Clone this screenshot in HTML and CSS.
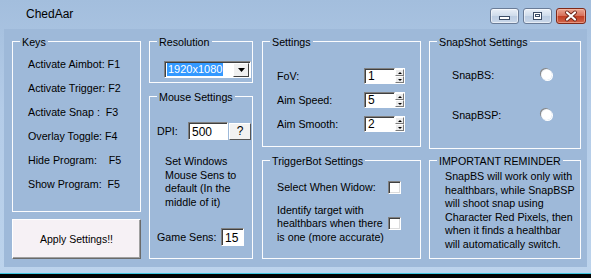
FILE: index.html
```html
<!DOCTYPE html>
<html lang="en">
<head>
    <meta charset="UTF-8">
    <title>ChedAar</title>
    <link rel="stylesheet" href="styles.css">
</head>
<body>
    <div class="window">
        <div class="titlebar">
            <span class="title">ChedAar</span>
            <div class="caption">
                <span class="cap-btn">
                    <svg width="27" height="14" viewBox="0 0 27 14"><rect x="8.5" y="7.5" width="10" height="3" fill="#fff" stroke="#3c4d66"/></svg>
                </span>
                <span class="cap-btn">
                    <svg width="27" height="14" viewBox="0 0 27 14"><rect x="9.5" y="3.5" width="8" height="7" fill="#fff" stroke="#3c4d66"/><rect x="11.5" y="5.5" width="4" height="2" fill="none" stroke="#3c4d66"/></svg>
                </span>
                <span class="cap-btn close">
                    <svg width="28" height="14" viewBox="0 0 28 14"><path d="M10 3.5 L18 10.5 M18 3.5 L10 10.5" stroke="#6b2418" stroke-width="4" stroke-linecap="round"/><path d="M10 3.5 L18 10.5 M18 3.5 L10 10.5" stroke="#fff" stroke-width="2.2" stroke-linecap="round"/></svg>
                </span>
            </div>
        </div>

        <div class="client">
            <div class="col col-keys">
                <section class="group keys">
                    <div class="group-title">Keys</div>
                    <div class="group-body key-list">
                        <span>Activate Aimbot: F1</span>
                        <span>Activate Trigger: F2</span>
                        <span>Activate Snap :  F3</span>
                        <span>Overlay Toggle: F4</span>
                        <span>Hide Program:    F5</span>
                        <span>Show Program:  F5</span>
                    </div>
                </section>
                <button class="apply" type="button">Apply Settings!!</button>
            </div>

            <div class="col col-mid">
                <section class="group resolution">
                    <div class="group-title">Resolution</div>
                    <div class="group-body">
                        <div class="select">
                            <span class="sel-text">1920x1080</span>
                            <span class="drop">
                                <svg width="7" height="4" viewBox="0 0 7 4"><path d="M0 0 H7 L3.5 4 Z" fill="#000"/></svg>
                            </span>
                        </div>
                    </div>
                </section>
                <section class="group mouse">
                    <div class="group-title">Mouse Settings</div>
                    <div class="group-body">
                        <div class="dpi-row">
                            <label for="dpi">DPI:</label>
                            <input class="field dpi" id="dpi" type="text" value="500">
                            <button class="help" type="button">?</button>
                        </div>
                        <p class="sens-note">Set Windows<br>Mouse Sens to<br>default (In the<br>middle of it)</p>
                        <div class="game-row">
                            <label for="gameSens">Game Sens:</label>
                            <input class="field game" id="gameSens" type="text" value="15">
                        </div>
                    </div>
                </section>
            </div>

            <div class="col col-settings">
                <section class="group settings">
                    <div class="group-title">Settings</div>
                    <div class="group-body">
                        <div class="spin-row">
                            <label for="fov">FoV:</label>
                            <input class="field spin" id="fov" type="text" value="1">
                            <span class="spinner"><span class="up"></span><span class="down"></span></span>
                        </div>
                        <div class="spin-row">
                            <label for="aimSpeed">Aim Speed:</label>
                            <input class="field spin" id="aimSpeed" type="text" value="5">
                            <span class="spinner"><span class="up"></span><span class="down"></span></span>
                        </div>
                        <div class="spin-row">
                            <label for="aimSmooth">Aim Smooth:</label>
                            <input class="field spin" id="aimSmooth" type="text" value="2">
                            <span class="spinner"><span class="up"></span><span class="down"></span></span>
                        </div>
                    </div>
                </section>
                <section class="group trigger">
                    <div class="group-title">TriggerBot Settings</div>
                    <div class="group-body">
                        <div class="check-row">
                            <span class="check-label">Select When Widow:</span>
                            <span class="checkbox"></span>
                        </div>
                        <div class="check-row second">
                            <span class="check-label">Identify target with<br>healthbars when there<br>is one (more accurate)</span>
                            <span class="checkbox"></span>
                        </div>
                    </div>
                </section>
            </div>

            <div class="col col-snap">
                <section class="group snap">
                    <div class="group-title">SnapShot Settings</div>
                    <div class="group-body">
                        <div class="radio-row">
                            <span class="radio-label">SnapBS:</span>
                            <span class="radio"></span>
                        </div>
                        <div class="radio-row">
                            <span class="radio-label">SnapBSP:</span>
                            <span class="radio"></span>
                        </div>
                    </div>
                </section>
                <section class="group reminder">
                    <div class="group-title">IMPORTANT REMINDER</div>
                    <div class="group-body">
                        <p>SnapBS will work only with<br>healthbars, while SnapBSP<br>will shoot snap using<br>Character Red Pixels, then<br>when it finds a healthbar<br>will automatically switch.</p>
                    </div>
                </section>
            </div>
        </div>
    </div>
    <div class="edge"></div>
</body>
</html>
```

FILE: styles.css
```css
* {
    margin: 0;
    padding: 0;
    box-sizing: border-box;
}

body {
    background-color: #000;
    font-family: 'Liberation Sans', Arial, sans-serif;
    font-size: 10.7px;
    color: #000;
    width: 591px;
    height: 278px;
    overflow: hidden;
}

.window {
    width: 591px;
    height: 273px;
    background: linear-gradient(180deg, #a3bedd 0%, #b4cce8 40%, #bcd3ec 100%);
}

/* title bar */
.titlebar {
    height: 29px;
    display: flex;
    justify-content: space-between;
    padding: 0 5px 0 26px;
}

.title {
    font-size: 12px;
    line-height: 29px;
    color: #000;
    padding-bottom: 1px;
}

.caption {
    display: flex;
    gap: 4px;
    margin-top: 8px;
    height: 16px;
}

.cap-btn {
    width: 29px;
    height: 16px;
    border: 1px solid #6a7c97;
    border-radius: 3px;
    background: linear-gradient(180deg, #eaf0f8 0%, #cfdceb 48%, #bccde2 52%, #cad8ea 100%);
    box-shadow: inset 0 0 0 1px rgba(255, 255, 255, 0.55);
    display: flex;
}

.cap-btn.close {
    width: 30px;
    border-color: #7f2a1a;
    background: linear-gradient(180deg, #e9a693 0%, #d7705a 48%, #c13d22 52%, #d0644a 100%);
    box-shadow: inset 0 0 0 1px rgba(255, 200, 180, 0.5);
}

/* client area */
.client {
    margin: 0 4px;
    height: 238px;
    background-color: #9eb9d9;
    display: flex;
    padding: 7px 0 0 8px;
}

.col {
    display: flex;
    flex-direction: column;
}

.col-keys {
    width: 129px;
    margin-right: 8px;
}

.col-mid {
    width: 104px;
    margin-right: 9px;
}

.col-settings {
    width: 159px;
    margin-right: 8px;
}

.col-snap {
    width: 152px;
}

/* group box: title sits in the top border line */
.group {
    display: flex;
    flex-direction: column;
}

.group-title {
    display: flex;
    line-height: 13px;
    white-space: nowrap;
}

.group-title::before,
.group-title::after {
    content: "";
    height: 7px;
    align-self: flex-end;
    border-top: 1px solid #fbfcfe;
}

.group-title::before {
    width: 7px;
    margin-right: 2px;
    border-left: 1px solid #fbfcfe;
}

.group-title::after {
    flex: 1;
    margin-left: 2px;
    border-right: 1px solid #fbfcfe;
}

.group-body {
    flex: 1;
    border: 1px solid #fbfcfe;
    border-top: 0;
}

/* keys */
.keys {
    height: 176px;
}

.key-list {
    display: flex;
    flex-direction: column;
    gap: 11px;
    padding: 9px 0 0 15px;
    line-height: 13px;
    white-space: pre;
}

.apply {
    margin-top: 7px;
    height: 40px;
    background-color: #f6f1f5;
    border: 1px solid;
    border-color: #fff #6a6a6a #6a6a6a #fff;
    box-shadow: inset -1px -1px 0 #a0a0a0;
    font-family: inherit;
    font-size: 10.5px;
    color: #000;
}

/* resolution */
.resolution {
    height: 47px;
}

.resolution .group-body {
    padding: 12px 0 0 14px;
}

.select {
    width: 87px;
    height: 17px;
    background-color: #fff;
    border: 1px solid;
    border-color: #808080 #fff #fff #808080;
    box-shadow: inset 1px 1px 0 #404040;
    display: flex;
    align-items: center;
    padding: 1px 1px 1px 2px;
}

.sel-text {
    flex: none;
    background-color: #3399ff;
    color: #fff;
    font-size: 11px;
    line-height: 13px;
    padding: 0 1px;
    white-space: nowrap;
}

.drop {
    margin-left: auto;
    width: 16px;
    height: 14px;
    background-color: #f0f0f0;
    border: 1px solid;
    border-color: #fff #404040 #404040 #fff;
    display: flex;
    align-items: center;
    justify-content: center;
}

/* mouse settings */
.mouse {
    margin-top: 8px;
    height: 168px;
}

.mouse .group-body {
    padding: 18px 0 0 7px;
}

.dpi-row,
.game-row {
    display: flex;
    align-items: center;
}

.dpi-row label {
    width: 31px;
}

.field {
    font-family: inherit;
    font-size: 12px;
    color: #000;
    background-color: #fff;
    border: 1px solid;
    border-color: #808080 #fff #fff #808080;
    box-shadow: inset 1px 1px 0 #404040;
    padding: 1px 0 0 3px;
    outline: none;
}

.dpi {
    width: 40px;
    height: 18px;
}

.help {
    width: 22px;
    height: 17px;
    margin-left: 1px;
    background-color: #f2f2f2;
    border: 1px solid;
    border-color: #fff #555 #555 #fff;
    font-family: inherit;
    font-size: 12px;
}

.sens-note {
    margin: 15px 0 0 8px;
    line-height: 13.5px;
}

.game-row {
    margin-top: 19px;
}

.game-row label {
    width: 64px;
}

.game {
    width: 23px;
    height: 18px;
}

/* settings */
.settings {
    height: 111px;
}

.settings .group-body {
    padding: 19px 0 0 14px;
    display: flex;
    flex-direction: column;
    gap: 8px;
}

.spin-row {
    display: flex;
    align-items: center;
}

.spin-row label {
    width: 87px;
}

.spin {
    width: 31px;
    height: 16px;
    padding-top: 0;
}

.spinner {
    width: 10px;
    height: 16px;
    display: flex;
    flex-direction: column;
    border: 1px solid #fff;
    border-left: 0;
}

.spinner span {
    flex: 1;
    background-color: #ececec;
    border: 1px solid;
    border-color: #fff #7a7a7a #7a7a7a #fff;
    position: relative;
}

.spinner .up::after,
.spinner .down::after {
    content: "";
    position: absolute;
    left: 2px;
    top: 2px;
    border-left: 2px solid transparent;
    border-right: 2px solid transparent;
}

.spinner .up::after {
    border-bottom: 2px solid #000;
}

.spinner .down::after {
    border-top: 2px solid #000;
}

/* triggerbot */
.trigger {
    margin-top: 8px;
    height: 104px;
}

.trigger .group-body {
    padding: 13px 0 0 14px;
}

.check-row {
    display: flex;
    align-items: center;
}

.check-row.second {
    margin-top: 9px;
}

.check-label {
    width: 111px;
    line-height: 13.5px;
    white-space: nowrap;
}

.checkbox {
    width: 13px;
    height: 13px;
    background-color: #fff;
    border: 1px solid;
    border-color: #808080 #fff #fff #808080;
    box-shadow: inset 1px 1px 0 #404040, inset -1px -1px 0 #dcdcdc;
}

/* snapshot */
.snap {
    height: 111px;
}

.snap .group-body {
    padding: 19px 0 0 22px;
}

.radio-row {
    display: flex;
    align-items: center;
    height: 13px;
    margin-bottom: 27px;
}

.radio-label {
    width: 89px;
}

.radio {
    width: 11px;
    height: 11px;
    border-radius: 50%;
    background: radial-gradient(circle at 55% 55%, #fff 55%, #e8e8e8 75%);
    box-shadow: -1px -1px 0 #8a8a8a, 1px 1px 0 #fff;
}

/* reminder */
.reminder {
    margin-top: 8px;
    height: 104px;
}

.reminder .group-body {
    padding: 2px 0 0 15px;
}

.reminder p {
    line-height: 13.5px;
    white-space: nowrap;
}

.edge {
    height: 1px;
    background-color: #3ec6de;
}
```
